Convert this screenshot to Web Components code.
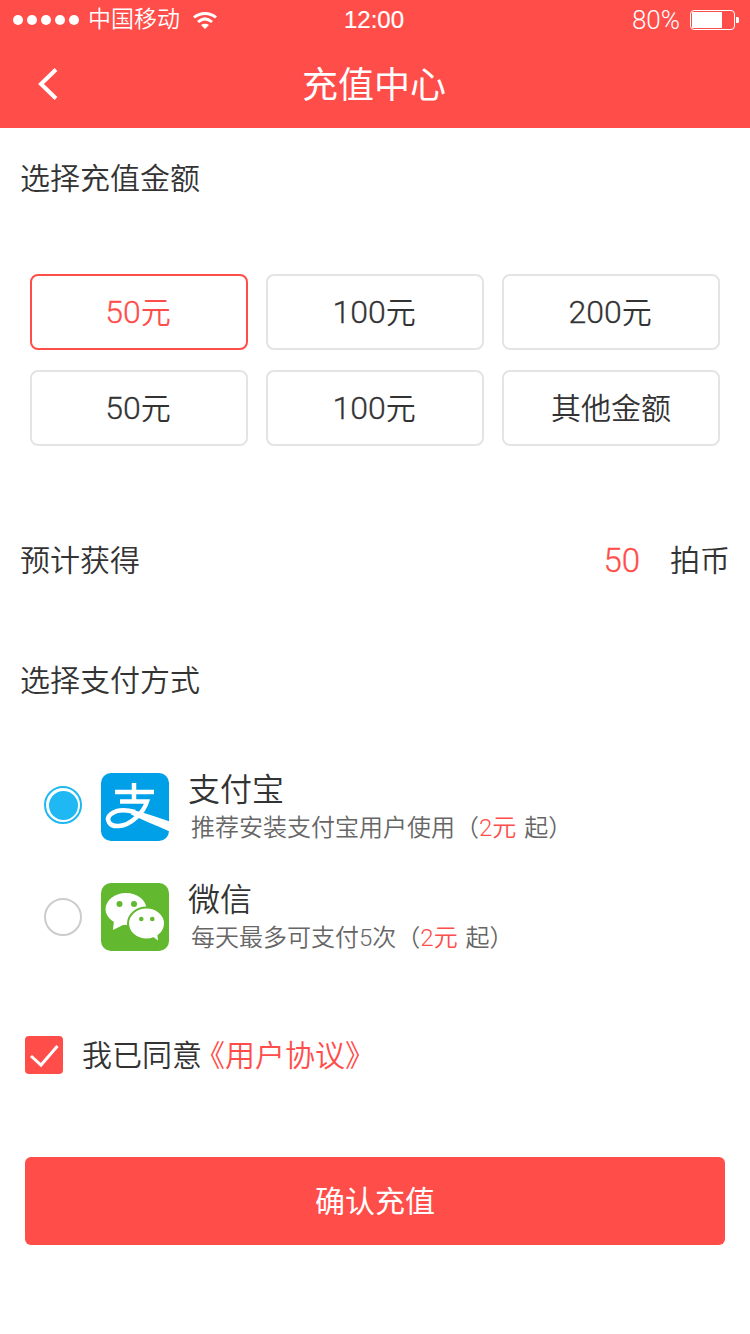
<!DOCTYPE html>
<html lang="zh">
<head>
<meta charset="utf-8">
<title>充值中心</title>
<style>
  html, body { margin: 0; padding: 0; background: #fff; }
  body {
    width: 750px;
    height: 1334px;
    overflow: hidden;
    font-family: Roboto, "Noto Sans CJK SC", sans-serif;
    font-weight: 350;
    color: #333;
    --red: #ff4d4a;
  }
</style>
</head>
<body>
<status-bar></status-bar>
<nav-bar>充值中心</nav-bar>
<section-title>选择充值金额</section-title>
<amount-grid>
  <amount-option selected num="50">元</amount-option>
  <amount-option num="100">元</amount-option>
  <amount-option num="200">元</amount-option>
  <amount-option num="50">元</amount-option>
  <amount-option num="100">元</amount-option>
  <amount-option>其他金额</amount-option>
</amount-grid>
<gain-row></gain-row>
<section-title>选择支付方式</section-title>
<pay-list>
  <pay-option selected icon="alipay" name="支付宝" sub="推荐安装支付宝用户使用" price="2元"></pay-option>
  <pay-option icon="wechat" name="微信" sub="每天最多可支付5次" price="2元"></pay-option>
</pay-list>
<agree-row></agree-row>
<confirm-button>确认充值</confirm-button>

<script>
class StatusBar extends HTMLElement {
  constructor() {
    super();
    this.attachShadow({ mode: 'open' });
  }
  connectedCallback() {
    this.shadowRoot.innerHTML = `
      <style>
        :host { display: grid; grid-template-columns: 1fr auto 1fr; align-items: center; height: 40px; background: var(--red); color: #fff; padding: 0 11px 0 13px; }
        .left, .right { display: flex; align-items: center; }
        .right { justify-content: flex-end; font-size: 26px; }
        .dots { display: flex; gap: 4px; margin-right: 9px; }
        .dots i { width: 10px; height: 10px; border-radius: 50%; background: #fff; }
        .carrier { font-size: 23px; line-height: 40px; }
        .wifi { margin-left: 13px; display: block; }
        .time { font-size: 24px; font-family: "Liberation Sans", sans-serif; font-weight: 400; -webkit-text-stroke: 0.2px #fff; margin-left: -4px; }
        .battery { margin-left: 10px; display: block; }
      </style>
      <div class="left">
        <div class="dots"><i></i><i></i><i></i><i></i><i></i></div>
        <span class="carrier">中国移动</span>
        <svg class="wifi" width="24" height="18" viewBox="0 0 24 18">
          <path d="M1 6.500C7 1 17 1 23 6.500" fill="none" stroke="#fff" stroke-width="3"/>
          <path d="M5 11C9.500 7 14.500 7 19 11" fill="none" stroke="#fff" stroke-width="3"/>
          <path d="M8 14 12 18 16 14C13.500 12.300 10.500 12.300 8 14Z" fill="#fff"/>
        </svg>
      </div>
      <div class="time">12:00</div>
      <div class="right">
        <span>80%</span>
        <svg class="battery" width="49" height="20" viewBox="0 0 49 20">
          <rect x="0.500" y="0.500" width="44" height="19" rx="3.500" fill="none" stroke="#fff"/>
          <rect x="2" y="2" width="30" height="16" fill="#fff"/>
          <path d="M46 7h1.500a1.500 1.500 0 0 1 1.500 1.500v3a1.500 1.500 0 0 1-1.500 1.500H46Z" fill="#fff"/>
        </svg>
      </div>
    `;
  }
}

class NavBar extends HTMLElement {
  constructor() {
    super();
    this.attachShadow({ mode: 'open' });
  }
  connectedCallback() {
    this.shadowRoot.innerHTML = `
      <style>
        :host { display: flex; align-items: center; justify-content: center; box-sizing: border-box; height: 88px; padding: 0 2px 4px 0; background: var(--red); color: #fff; font-size: 36px; font-weight: 400; position: relative; }
        svg { position: absolute; left: 36px; top: 26px; }
      </style>
      <svg width="24" height="36" viewBox="0 0 24 36"><path d="M20 3.500 5 18 20 32.500" fill="none" stroke="#fff" stroke-width="4"/></svg>
      <slot></slot>
    `;
  }
}

class SectionTitle extends HTMLElement {
  constructor() {
    super();
    this.attachShadow({ mode: 'open' });
  }
  connectedCallback() {
    this.shadowRoot.innerHTML = `
      <style>
        :host { display: block; box-sizing: border-box; height: 100px; padding: 2px 0 0 20px; line-height: 98px; font-size: 30px; color: #333; }
      </style>
      <slot></slot>
    `;
  }
}

class AmountGrid extends HTMLElement {
  constructor() {
    super();
    this.attachShadow({ mode: 'open' });
  }
  connectedCallback() {
    this.shadowRoot.innerHTML = `
      <style>
        :host { display: grid; grid-template-columns: repeat(3, 218px); column-gap: 18px; row-gap: 20px; padding: 46px 30px 0; }
      </style>
      <slot></slot>
    `;
  }
}

class AmountOption extends HTMLElement {
  constructor() {
    super();
    this.attachShadow({ mode: 'open' });
  }
  connectedCallback() {
    const num = this.getAttribute('num') || '';
    this.shadowRoot.innerHTML = `
      <style>
        :host { display: flex; align-items: center; justify-content: center; box-sizing: border-box; height: 76px; padding-bottom: 5px; border: 2px solid #e4e4e4; border-radius: 8px; font-size: 30px; color: #333; }
        :host([selected]) { border-color: var(--red); color: var(--red); }
        :host([num]) { padding-right: 2px; }
        .num { font-size: 32px; -webkit-text-stroke: 0.3px currentColor; }
      </style>
      <div><span class="num">${num}</span><slot></slot></div>
    `;
  }
}

class GainRow extends HTMLElement {
  constructor() {
    super();
    this.attachShadow({ mode: 'open' });
  }
  connectedCallback() {
    this.shadowRoot.innerHTML = `
      <style>
        :host { display: flex; align-items: center; box-sizing: border-box; height: 100px; margin-top: 64px; margin-bottom: 20px; padding: 0 20px 4px 20px; font-size: 30px; color: #333; }
        .num { margin: 4px 30px 0 auto; font-size: 33px; color: var(--red); -webkit-text-stroke: 0.3px currentColor; }
      </style>
      <span>预计获得</span>
      <span class="num">50</span>
      <span>拍币</span>
    `;
  }
}

class PayList extends HTMLElement {
  constructor() {
    super();
    this.attachShadow({ mode: 'open' });
  }
  connectedCallback() {
    this.shadowRoot.innerHTML = `
      <style>
        :host { display: flex; flex-direction: column; gap: 42px; padding: 43px 0 0 44px; }
      </style>
      <slot></slot>
    `;
  }
}

const PAY_ICONS = {
  alipay: `
    <svg width="68" height="68" viewBox="0 0 68 68">
      <defs><clipPath id="ali"><rect width="68" height="68" rx="10"/></clipPath></defs>
      <rect width="68" height="68" rx="10" fill="#00a0e9"/>
      <g clip-path="url(#ali)">
        <path d="M14 19H53M33 10V28M19 28.500H46C43 39 30 52 18 53 8 54 4 46 10 41 17 35.500 27 37 34 39" fill="none" stroke="#fff" stroke-width="4.500"/>
        <path d="M32 37C44 40 56 44 70 49V59C56 53 42 47 30 41.500Z" fill="#fff"/>
      </g>
    </svg>`,
  wechat: `
    <svg width="68" height="68" viewBox="0 0 68 68">
      <rect width="68" height="68" rx="10" fill="#62b82e"/>
      <ellipse cx="25" cy="26" rx="20.500" ry="16" fill="#fff"/>
      <path d="M13 37 12 47 24 41Z" fill="#fff"/>
      <circle cx="18.500" cy="21" r="3" fill="#62b82e"/>
      <circle cx="33" cy="21" r="3" fill="#62b82e"/>
      <ellipse cx="45.500" cy="40.500" rx="18.500" ry="16" fill="#fff" stroke="#62b82e" stroke-width="2"/>
      <path d="M51 53 57 57.500 56 49Z" fill="#fff"/>
      <circle cx="40.300" cy="36" r="2.300" fill="#62b82e"/>
      <circle cx="51.300" cy="36" r="2.300" fill="#62b82e"/>
    </svg>`,
};

class PayOption extends HTMLElement {
  constructor() {
    super();
    this.attachShadow({ mode: 'open' });
  }
  connectedCallback() {
    const icon = this.getAttribute('icon');
    this.shadowRoot.innerHTML = `
      <style>
        :host { display: flex; align-items: center; height: 68px; }
        .radio { box-sizing: border-box; width: 38px; height: 38px; border-radius: 50%; border: 2px solid #ccc; margin-right: 19px; display: flex; align-items: center; justify-content: center; }
        :host([selected]) .radio { border-color: #1fb8f3; margin-top: -4px; }
        :host([selected]) .radio::after { content: ""; width: 29px; height: 29px; border-radius: 50%; background: #1fb8f3; }
        svg { display: block; }
        .text { margin-left: 19px; display: flex; flex-direction: column; }
        .name { font-size: 32px; line-height: 40px; margin-top: -2px; color: #333; }
        .sub { font-size: 24px; line-height: 30px; margin-top: 3px; color: #666; margin-left: 3px; white-space: pre; word-spacing: 2px; }
        .sub b { font-weight: inherit; color: var(--red); }
      </style>
      <div class="radio"></div>
      ${PAY_ICONS[icon]}
      <div class="text">
        <div class="name">${this.getAttribute('name')}</div>
        <div class="sub">${this.getAttribute('sub')}（<b>${this.getAttribute('price')}</b> 起）</div>
      </div>
    `;
  }
}

class AgreeRow extends HTMLElement {
  constructor() {
    super();
    this.attachShadow({ mode: 'open' });
  }
  connectedCallback() {
    this.shadowRoot.innerHTML = `
      <style>
        :host { display: flex; align-items: center; height: 38px; margin-top: 85px; padding-left: 25px; font-size: 30px; color: #333; }
        svg { display: block; margin-right: 19px; }
        .label { display: flex; margin-top: -4px; }
        a { color: var(--red); margin-left: -7px; }
      </style>
      <svg width="38" height="38" viewBox="0 0 38 38">
        <rect width="38" height="38" rx="4" fill="#ff4d4a"/>
        <path d="M6 20 16 29 32.500 10" fill="none" stroke="#fff" stroke-width="3"/>
      </svg>
      <div class="label"><span>我已同意</span><a>《用户协议》</a></div>
    `;
  }
}

class ConfirmButton extends HTMLElement {
  constructor() {
    super();
    this.attachShadow({ mode: 'open' });
  }
  connectedCallback() {
    this.shadowRoot.innerHTML = `
      <style>
        :host { display: flex; align-items: center; justify-content: center; box-sizing: border-box; height: 88px; margin: 83px 25px 0; padding-bottom: 4px; background: var(--red); border-radius: 6px; color: #fff; font-size: 30px; font-weight: 400; }
      </style>
      <slot></slot>
    `;
  }
}

customElements.define('status-bar', StatusBar);
customElements.define('nav-bar', NavBar);
customElements.define('section-title', SectionTitle);
customElements.define('amount-grid', AmountGrid);
customElements.define('amount-option', AmountOption);
customElements.define('gain-row', GainRow);
customElements.define('pay-list', PayList);
customElements.define('pay-option', PayOption);
customElements.define('agree-row', AgreeRow);
customElements.define('confirm-button', ConfirmButton);
</script>
</body>
</html>
